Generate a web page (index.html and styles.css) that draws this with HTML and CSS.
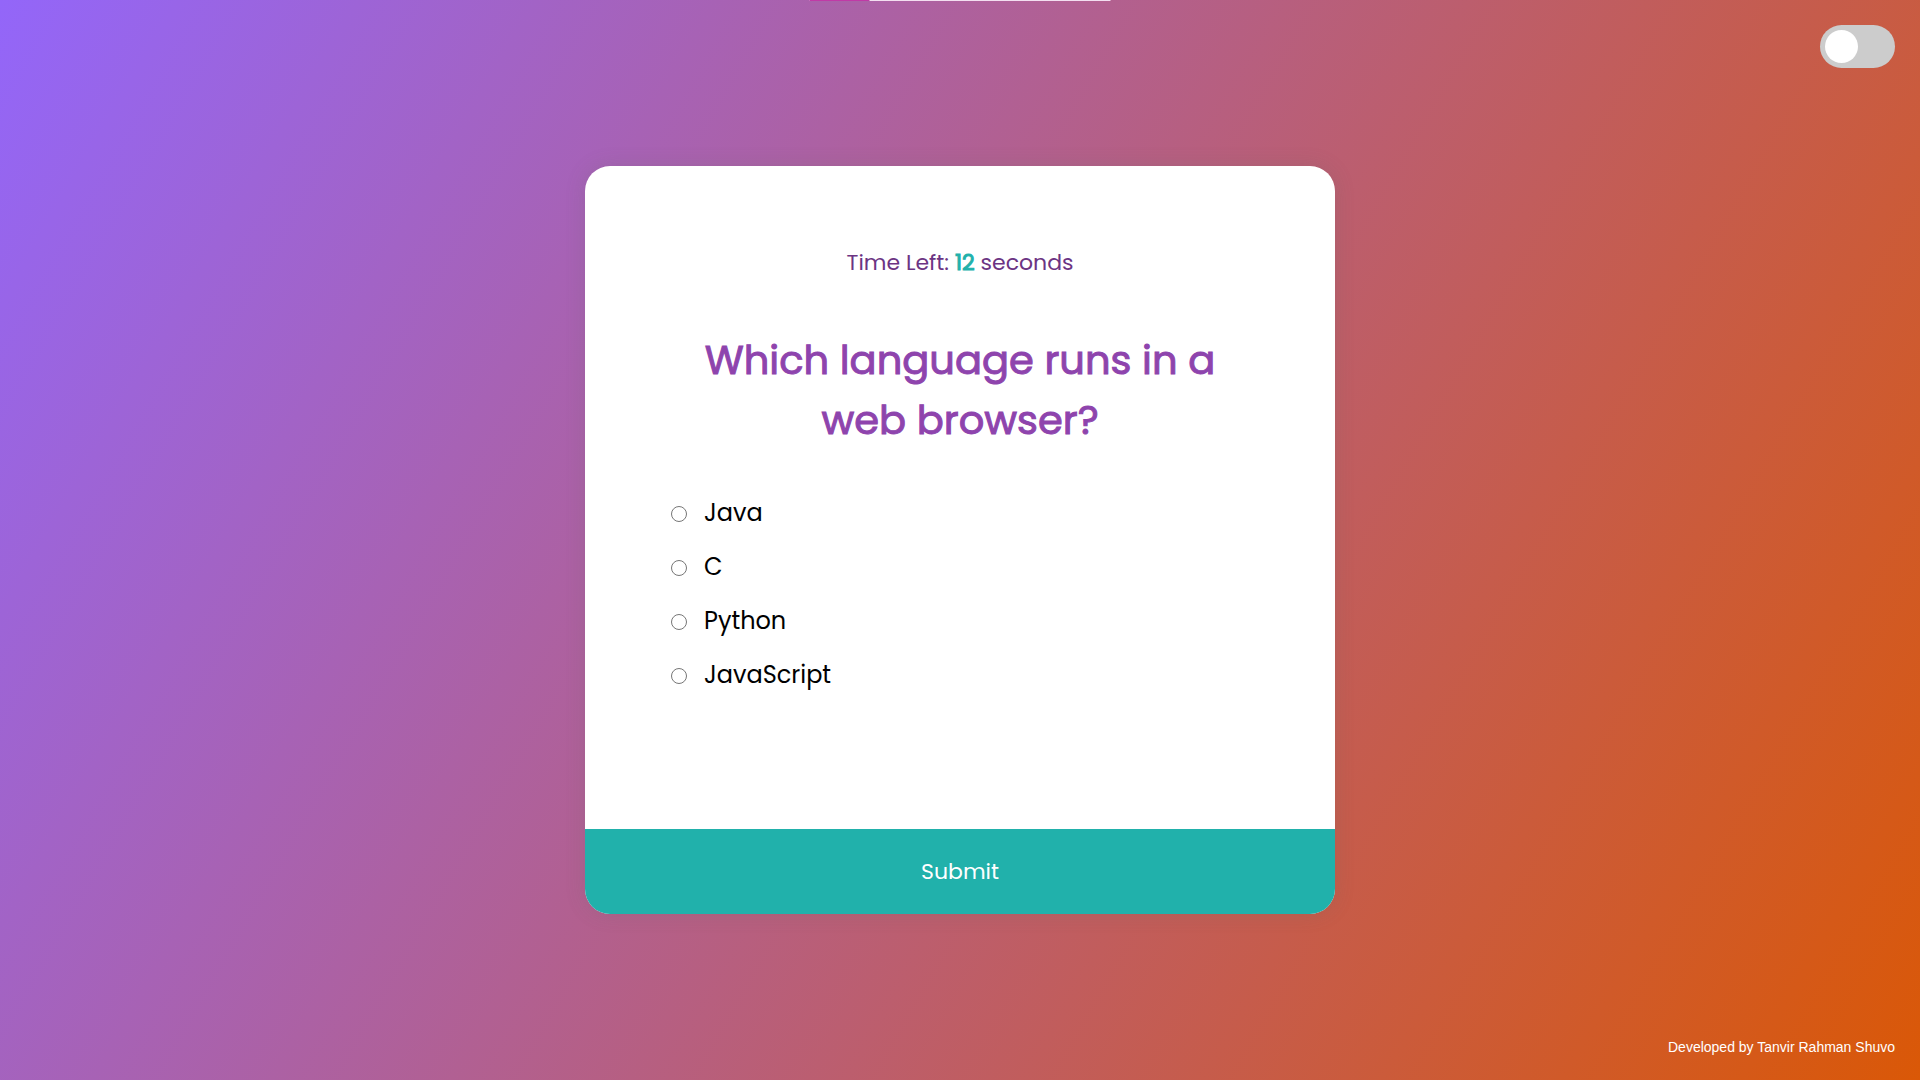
FILE: index.html
```
<!DOCTYPE html>
<html lang="en">
<head>
  <meta charset="utf-8">
  <meta name="viewport" content="width=device-width, initial-scale=1">
  <title>Quiz</title>
  <link rel="stylesheet" href="styles.css">
</head>
<body>
  <div class="top-strip" aria-hidden="true"><span class="top-strip-fill"></span></div>
  <header class="toolbar">
    <input class="switch" type="checkbox" role="switch" aria-label="Dark mode">
  </header>
  <main class="stage">
    <form class="quiz-card">
      <div class="quiz-body">
        <p class="timer">Time Left: <strong class="timer-value">12</strong> seconds</p>
        <h1 class="question">Which language runs in a web browser?</h1>
        <ul class="answers">
          <li class="answer"><input class="radio" type="radio" name="answer" id="a"><label for="a">Java</label></li>
          <li class="answer"><input class="radio" type="radio" name="answer" id="b"><label for="b">C</label></li>
          <li class="answer"><input class="radio" type="radio" name="answer" id="c"><label for="c">Python</label></li>
          <li class="answer"><input class="radio" type="radio" name="answer" id="d"><label for="d">JavaScript</label></li>
        </ul>
      </div>
      <button class="submit" type="button">Submit</button>
    </form>
  </main>
  <footer class="credit">Developed by Tanvir Rahman Shuvo</footer>
</body>
</html>
```
FILE: styles.css
```
* {
  box-sizing: border-box;
}

body {
  margin: 0;
  min-height: 100vh;
  display: grid;
  grid-template-rows: 92px 1fr 92px;
  background: linear-gradient(120deg, #9366f9, #da5807);
  font-family: Poppins, Inter, sans-serif;
}

/* Thin progress strip over the top edge of the window */
.top-strip {
  position: absolute;
  top: 0;
  left: 50%;
  width: 301px;
  height: 1px;
  transform: translateX(-50%);
  background: #f3def0;
}

.top-strip-fill {
  display: block;
  width: 20%;
  height: 1px;
  background: #c03aa6;
}

.toolbar {
  display: flex;
  justify-content: flex-end;
  align-items: flex-start;
  padding: 25px 25px 0;
}

.switch {
  appearance: none;
  display: flex;
  align-items: center;
  width: 75px;
  height: 43px;
  margin: 0;
  padding: 5px;
  border-radius: 22px;
  background: #ccc;
  cursor: pointer;
}

.switch::before {
  content: "";
  width: 33px;
  height: 33px;
  border-radius: 50%;
  background: #fff;
}

.switch:checked {
  justify-content: flex-end;
}

.stage {
  display: flex;
  justify-content: center;
  align-items: center;
}

.quiz-card {
  width: 750px;
  max-width: 100%;
  overflow: hidden;
  border-radius: 25px;
  background: #fff;
  box-shadow: 0 0 20px rgba(100, 100, 100, 0.2);
}

.quiz-body {
  padding: 81px 84px 136px;
}

.timer {
  margin: 0;
  color: #6c3483;
  font-size: 22px;
  line-height: 32px;
  text-align: center;
}

/* Outlined regular weight gives a softer bold than the semibold face */
.timer-value {
  color: #21b1ab;
  font-weight: 400;
  -webkit-text-stroke: 1px currentColor;
}

.question {
  margin: 51px 0 45px;
  color: #8e44ad;
  font-size: 40px;
  font-weight: 400;
  line-height: 60px;
  text-align: center;
  -webkit-text-stroke: 1px currentColor;
}

.answers {
  display: grid;
  gap: 18px;
  margin: 0;
  padding: 0;
  list-style: none;
}

.answer {
  display: flex;
  align-items: center;
  gap: 17px;
  color: #000;
  font-size: 24px;
  line-height: 36px;
}

.radio {
  width: 16px;
  height: 16px;
  margin: 2px 0 0 2px;
}

.submit {
  display: block;
  width: 100%;
  padding: 25px;
  border: 0;
  background: #21b1ab;
  color: #fff;
  font-family: inherit;
  font-size: 22px;
  line-height: 35px;
  cursor: pointer;
}

.credit {
  align-self: end;
  padding: 0 25px 25px;
  color: #fff;
  font-family: "Liberation Sans", Arial, sans-serif;
  font-size: 14px;
  line-height: 16px;
  text-align: right;
}
```
